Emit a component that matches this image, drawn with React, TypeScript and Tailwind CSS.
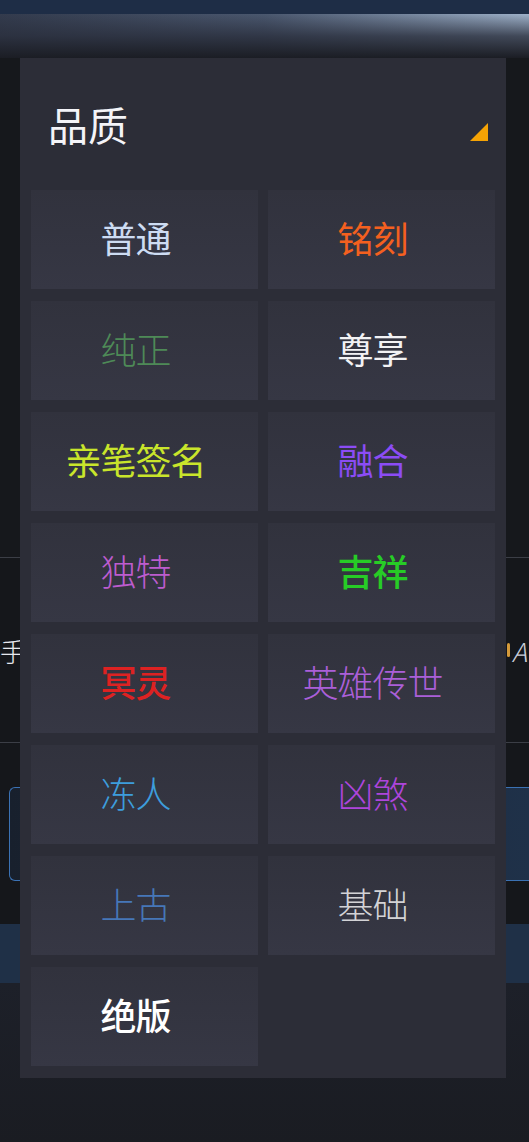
import React from "react";

type Quality = { name: string; color: string; weight: string };

const qualities: Quality[] = [
  { name: "普通", color: "text-[#cddcf2]", weight: "font-normal" },
  { name: "铭刻", color: "text-[#f4601f]", weight: "font-normal" },
  { name: "纯正", color: "text-[#4e8a57]", weight: "font-light" },
  { name: "尊享", color: "text-[#f2f2f4]", weight: "font-normal" },
  { name: "亲笔签名", color: "text-[#c9e52b]", weight: "font-normal" },
  { name: "融合", color: "text-[#8b4cf5]", weight: "font-normal" },
  { name: "独特", color: "text-[#bd5ccf]", weight: "font-light" },
  { name: "吉祥", color: "text-[#27cc26]", weight: "font-medium" },
  { name: "冥灵", color: "text-[#dd2222]", weight: "font-medium" },
  { name: "英雄传世", color: "text-[#ab5fd9]", weight: "font-light" },
  { name: "冻人", color: "text-[#3d9ddc]", weight: "font-light" },
  { name: "凶煞", color: "text-[#ae45dc]", weight: "font-light" },
  { name: "上古", color: "text-[#4677b8]", weight: "font-light" },
  { name: "基础", color: "text-[#d3d3d6]", weight: "font-light" },
  { name: "绝版", color: "text-[#ffffff]", weight: "font-medium" },
];

const font = { fontFamily: '"Noto Sans CJK SC", "Noto Sans", sans-serif' };

const QualityCell = ({ q }: { q: Quality }) => (
  <button className="flex h-[99px] items-center justify-center bg-gradient-to-b from-[#31323d] to-[#363744] pb-[6px] pr-[18px]">
    <span className={`text-[36px] leading-none tracking-[-1px] ${q.color} ${q.weight}`}>{q.name}</span>
  </button>
);

// page behind the dropdown
const Backdrop = () => (
  <div className="flex w-full flex-col">
    <div className="h-[14px] bg-[#1e2d46]" />
    <div className="h-[44px] bg-gradient-to-r from-[#333b4d] via-[#4a576e] to-[#9fb2ca]">
      <div className="h-full bg-gradient-to-b from-transparent via-[#2a2f3d]/80 to-[#1b1d24]" />
    </div>
    <div className="h-[499px] bg-[#16181c]" />
    <div className="h-px bg-[#3b3e46]" />
    <div className="flex h-[184px] items-center justify-between bg-[#15171b] pr-[2px]">
      <span className="text-[26px] font-light text-[#e6e8ee]">手号</span>
      <span className="flex items-center gap-[2px] text-[26px] font-light italic text-[#c9ced8]">
        <span className="h-[14px] w-[3px] rounded-full bg-[#d59a3a]" />
        A
      </span>
    </div>
    <div className="h-px bg-[#3b3e46]" />
    <div className="flex h-[181px] flex-col justify-center bg-[#15171b] pl-[9px]">
      <div className="h-[94px] rounded-l-[6px] border border-r-0 border-[#3b72b4] bg-gradient-to-r from-[#18202d] to-[#1f3149]" />
    </div>
    <div className="h-[59px] bg-[#1f3047]" />
    <div className="h-[159px] bg-gradient-to-b from-[#1d2029] to-[#1a1c22]" />
  </div>
);

export default function App() {
  return (
    <div className="relative h-[1142px] w-[529px] overflow-hidden bg-[#16181c]" style={font}>
      <Backdrop />

      <div className="absolute left-[20px] top-[58px] w-[486px] bg-[#2c2d37] pb-[12px]">
        <div className="flex h-[132px] items-center justify-between pl-[28px] pr-[18px]">
          <span className="text-[40px] font-normal leading-none text-[#f4f4f8]">品质</span>
          <svg width="18" height="18" viewBox="0 0 18 18" className="mt-[16px]">
            <polygon points="0,18 18,0 18,18" fill="#f5a305" />
          </svg>
        </div>
        <div className="grid grid-cols-2 gap-x-[10px] gap-y-[12px] px-[11px]">
          {qualities.map((q) => (
            <QualityCell key={q.name} q={q} />
          ))}
        </div>
      </div>
    </div>
  );
}
